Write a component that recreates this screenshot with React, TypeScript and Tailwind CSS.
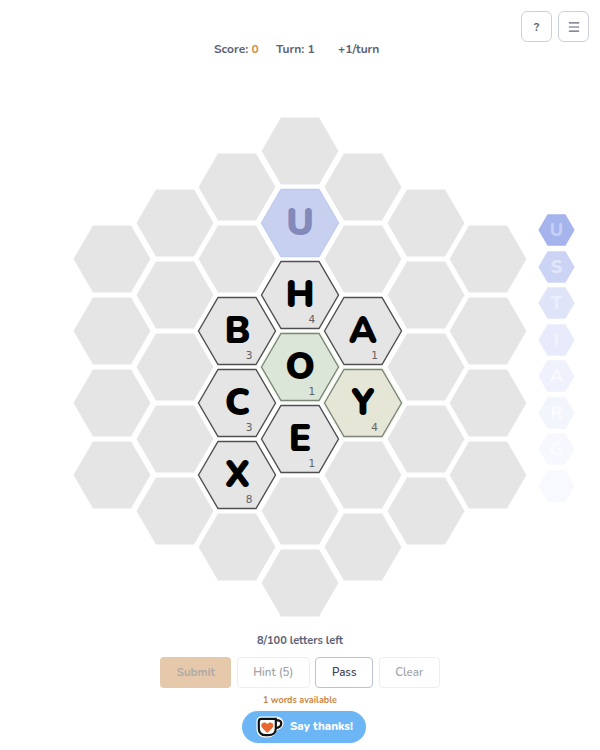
import { Menu } from 'lucide-react';

type Tile = { letter: string; value: number; fill?: string };

const tiles: Record<string, Tile> = {
  '3-2': { letter: 'H', value: 4 },
  '2-2': { letter: 'B', value: 3 },
  '4-2': { letter: 'A', value: 1 },
  '3-3': { letter: 'O', value: 1, fill: '#dce6d8' },
  '2-3': { letter: 'C', value: 3 },
  '4-3': { letter: 'Y', value: 4, fill: '#e5e6d6' },
  '3-4': { letter: 'E', value: 1 },
  '2-4': { letter: 'X', value: 8 },
};

const columns = [4, 5, 6, 7, 6, 5, 4];

const queue = [
  { letter: 'U', fill: '#a5b4ec', text: '#c6d0f4' },
  { letter: 'S', fill: '#ccd4f5', text: '#e2e7fa' },
  { letter: 'T', fill: '#dfe4f9', text: '#eceffb' },
  { letter: 'I', fill: '#e8ebfb', text: '#f1f3fd' },
  { letter: 'A', fill: '#eff1fc', text: '#f8f9fe' },
  { letter: 'R', fill: '#f3f5fd', text: '#fafbfe' },
  { letter: 'G', fill: '#f7f8fe', text: '#fbfcff' },
  { letter: '', fill: '#f8f9fe', text: '#f8f9fe' },
];

const HEX_POINTS = '0.5,34 20,0.5 58,0.5 77.5,34 58,67.5 20,67.5';

function HexShape({ fill, stroke, halo }: { fill: string; stroke?: string; halo?: boolean }) {
  return (
    <svg viewBox="0 0 78 68" className="absolute inset-0 h-full w-full overflow-visible">
      {halo && <polygon points={HEX_POINTS} fill="none" stroke="#f3faee" strokeWidth={4} />}
      <polygon points={HEX_POINTS} fill={fill} stroke={stroke ?? 'none'} strokeWidth={1.4} />
    </svg>
  );
}

function Cell({ tile, pending }: { tile?: Tile; pending?: boolean }) {
  if (pending) {
    return (
      <div className="relative flex h-[68px] w-[78px] items-center justify-center">
        <HexShape fill="#c8d0f0" stroke="#c0cbf0" />
        <span className="relative text-[37px] font-black leading-[26px] text-[#8389bb]">U</span>
      </div>
    );
  }
  if (!tile) {
    return (
      <div className="relative h-[68px] w-[78px]">
        <HexShape fill="#e5e5e5" />
      </div>
    );
  }
  return (
    <div className="relative flex h-[68px] w-[78px] items-center justify-center">
      <HexShape
        fill={tile.fill ?? '#e5e5e5'}
        stroke={tile.fill ? '#7d8679' : '#4f4f4f'}
        halo={!!tile.fill}
      />
      <span className="relative text-[37px] font-black leading-[26px] text-black">{tile.letter}</span>
      <span className="absolute bottom-[5px] right-[24px] font-['DejaVu_Sans',sans-serif] text-[10.500px] leading-none text-[#626262]">
        {tile.value}
      </span>
    </div>
  );
}

function Cup() {
  return (
    <svg viewBox="0 0 28 22" className="h-[22px] w-[28px] shrink-0">
      <path
        d="M0.500 5C0.500 2 2.500 0.500 5 0.500H20c4 0 7.500 2.500 7.500 6.500s-3 6.500-6.500 7c-1.500 4.500-4.500 7.500-9.500 7.500H9C3.500 21.500 0.500 17.500 0.500 12.500Z"
        fill="#fff"
      />
      <path
        d="M2.800 5.500C2.800 3.800 3.700 2.800 5.200 2.800H19.800V12.500c0 4-3 6.700-7.300 6.700H9.500C5.500 19.200 2.800 16.500 2.800 12.500Z"
        fill="#fff"
        stroke="#111"
        strokeWidth={2.200}
      />
      <path
        d="M19.800 4.200c3.300 0 5.500 1 5.500 3.300s-2.500 4.500-5.500 4.500"
        fill="none"
        stroke="#111"
        strokeWidth={2.200}
      />
      <path
        d="M11.300 17 6.500 12.300c-1.700-1.800-1.500-4 0-5.200s3.600-.8 4.800 1c1.200-1.800 3.300-2.200 4.800-1s1.700 3.400 0 5.200Z"
        fill="#e8662f"
      />
    </svg>
  );
}

export default function App() {
  return (
    <div className="h-[750px] w-[600px] overflow-hidden bg-white font-['Nunito','Noto_Sans',sans-serif] text-[#5c6275] antialiased">
      {/* Top buttons */}
      <div className="flex justify-end gap-[6px] pr-[11px] pt-[11px]">
        <button className="flex h-[31px] w-[31px] items-center justify-center rounded-[6px] border border-[#ccd0dc] text-[12px] font-bold">
          ?
        </button>
        <button className="flex h-[31px] w-[31px] items-center justify-center rounded-[6px] border border-[#ccd0dc]">
          <Menu size={14} strokeWidth={2} />
        </button>
      </div>

      {/* Score row */}
      <div className="-mt-[1px] flex h-[16px] items-center pl-[214px] text-[12px] font-bold leading-none">
        <span className="w-[62px]">
          Score: <span className="text-[#d08a45]">0</span>
        </span>
        <span className="w-[62px]">Turn: 1</span>
        <span>+1/turn</span>
      </div>

      {/* Board + upcoming letters */}
      <div className="mt-[59px] flex items-start pl-[73px]">
        <div className="flex h-[502px] w-[454px] items-center">
          {columns.map((count, col) => (
            <div
              key={col}
              className={`flex w-[78px] shrink-0 flex-col gap-[4px] ${col > 0 ? '-ml-[15.3px]' : ''}`}
            >
              {Array.from({ length: count }).map((_, row) =>
                col === 3 && row === 1 ? (
                  <Cell key={row} pending />
                ) : (
                  <Cell key={row} tile={tiles[`${col}-${row}`]} />
                ),
              )}
            </div>
          ))}
        </div>

        <div className="ml-[11px] mt-[98px] flex flex-col gap-[4.5px]">
          {queue.map((q, i) => (
            <div key={i} className="relative flex h-[32px] w-[37px] items-center justify-center">
              <HexShape fill={q.fill} />
              <span className="relative text-[18px] font-extrabold leading-none" style={{ color: q.text }}>
                {q.letter}
              </span>
            </div>
          ))}
        </div>
      </div>

      {/* Footer */}
      <div className="mt-[16px] flex flex-col items-center">
        <div className="text-[11px] font-bold leading-[14px]">8/100 letters left</div>
        <div className="mt-[9px] flex gap-[5.500px] text-[11.500px] font-semibold">
          <button className="h-[31px] w-[71px] rounded-[4px] bg-[#e6c9aa] font-bold text-[#b0aba6]">Submit</button>
          <button className="h-[31px] w-[73px] rounded-[4px] border border-[#eceef3] text-[#a3a5ac]">Hint (5)</button>
          <button className="h-[31px] w-[58px] rounded-[4px] border border-[#bcc1d0] text-[#3f4455]">Pass</button>
          <button className="h-[31px] w-[61px] rounded-[4px] border border-[#eceef3] text-[#a3a5ac]">Clear</button>
        </div>
        <div className="mt-[6px] text-[9px] font-bold leading-[12px] text-[#c98544]">1 words available</div>
        <button className="ml-[8px] mt-[5px] flex h-[32px] w-[124px] items-center gap-[6px] rounded-full bg-[#6cb6f6] pl-[14px] text-[11.500px] font-extrabold text-white">
          <Cup />
          Say thanks!
        </button>
      </div>
    </div>
  );
}
